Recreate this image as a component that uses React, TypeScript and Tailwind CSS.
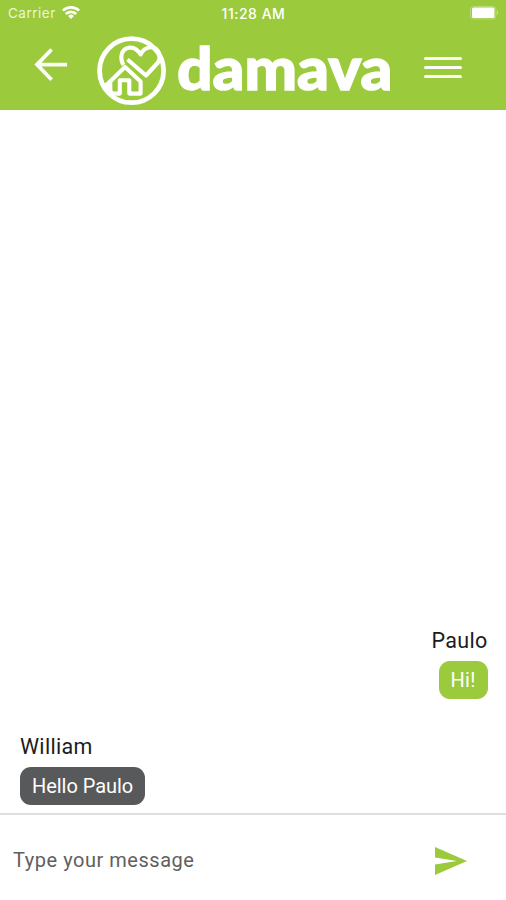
const messages = [
  { id: 1, author: "Paulo", text: "Hi!", mine: true },
  { id: 2, author: "William", text: "Hello Paulo", mine: false },
];

function StatusBar() {
  return (
    <div className="grid h-[27px] grid-cols-3 items-center pl-2 pr-[7px] font-['Inter',sans-serif] text-[13.5px] text-white">
      <div className="flex items-center gap-1.5">
        <span className="w-[48px] whitespace-nowrap tracking-[0.5px] text-white/80">Carrier</span>
        <svg width="18" height="13" viewBox="0 0 18 13" fill="none" stroke="currentColor" strokeWidth="2.6" className="-mt-0.5">
          <path d="M0.9 4.7a11.5 11.5 0 0 1 16.2 0" />
          <path d="M3.8 8a7.4 7.4 0 0 1 10.4 0" />
          <path d="M9 13l-2.9-3a4.2 4.2 0 0 1 5.8 0z" fill="currentColor" stroke="none" />
        </svg>
      </div>
      <span className="whitespace-nowrap text-center text-[14px] font-medium tracking-[0.5px]">11:28 AM</span>
      <div className="flex justify-end">
        <svg width="29" height="14" viewBox="0 0 29 14" className="-mt-px">
          <rect x="0.5" y="0.5" width="25.5" height="12.5" rx="3" fill="none" stroke="#fff" strokeOpacity="0.3" />
          <rect x="2" y="1.5" width="22.5" height="10.5" rx="1.5" fill="#fff" />
          <path d="M27 4.5q2 2.2 0 4.4z" fill="#fff" fillOpacity="0.5" />
        </svg>
      </div>
    </div>
  );
}

function Logo() {
  return (
    <svg width="300" height="83" viewBox="0 -7 300 83" className="shrink-0">
      <g fill="none" stroke="#fff" strokeLinejoin="round">
        <circle cx="36.6" cy="36.7" r="32" strokeWidth="4.8" />
        <path d="M11 51.5L30 33L45.6 47.5V59.6H34.3V46.2H24.8V59.6H15.3V48" strokeWidth="4.1" />
        <path d="M9 50l8 10" strokeWidth="5" />
        <path d="M32.5 25.5L51 41.5L63 28.5C67 22 63 13.2 56 13.3Q49 13.6 45.6 20.4Q40.5 12.3 33.5 13.8C26 15.5 24.5 24 28.5 31" strokeWidth="4.1" />
      </g>
      <text
        x="82"
        y="55.5"
        fill="#fff"
        stroke="#fff"
        strokeWidth="1.4"
        fontSize="58.5"
        textLength="215.5"
        lengthAdjust="spacingAndGlyphs"
        className="font-['Lato',sans-serif] font-black"
      >
        damava
      </text>
    </svg>
  );
}

function Header() {
  return (
    <header className="h-[110px] bg-[#9bca3c]">
      <StatusBar />
      <div className="flex h-[83px] items-start">
        <button aria-label="Back" className="ml-[34px] mt-[21px] w-[34px] text-white/95">
          <svg width="34" height="34" viewBox="0 0 34 34" fill="none" stroke="currentColor" strokeWidth="3.8">
            <path d="M17.6 1.5L3 16.6L17.6 31.8M3 16.6H33" />
          </svg>
        </button>
        <div className="ml-[27px]">
          <Logo />
        </div>
        <button aria-label="Menu" className="ml-[29px] mt-[29px] flex w-[38px] flex-col gap-[6px] pt-px">
          <span className="h-[3px] rounded-full bg-white/95" />
          <span className="h-[3px] rounded-full bg-white/95" />
          <span className="h-[3px] rounded-full bg-white/95" />
        </button>
      </div>
    </header>
  );
}

export default function App() {
  return (
    <div className="flex h-[900px] w-[506px] flex-col bg-white font-['Roboto',sans-serif]">
      <Header />
      <main className="flex flex-1 flex-col justify-end gap-[34px] pb-2 pl-5 pr-[18.5px]">
        {messages.map((m) => (
          <div key={m.id} className={m.mine ? "flex flex-col items-end" : "flex flex-col items-start"}>
            <span className="h-[34px] text-[21.5px] leading-[28px] tracking-[0.3px] text-[#1c1c1c]">{m.author}</span>
            <div
              className={
                m.mine
                  ? "h-[38px] rounded-[11px] bg-[#9bca3c] px-3 text-[20px] leading-[39px] tracking-[0.2px] text-white"
                  : "h-[38px] rounded-[11px] bg-[#58595b] px-3 text-[20px] leading-[39px] tracking-[-0.05px] text-white"
              }
            >
              {m.text}
            </div>
          </div>
        ))}
      </main>
      <footer className="flex h-[87px] items-center justify-between border-t-2 border-[#dedede] pl-[13px] pr-[39px]">
        <input
          placeholder="Type your message"
          className="h-10 w-[300px] pt-[5px] text-[20px] tracking-[0.53px] outline-none placeholder:text-[#606060]"
        />
        <button aria-label="Send" className="pt-[6px]">
          <svg width="32" height="28" viewBox="0 0 32 28" fill="#9bca3c">
            <path d="M0 0L32 14L0 28V17.5L22 14L0 10.5z" />
          </svg>
        </button>
      </footer>
    </div>
  );
}
